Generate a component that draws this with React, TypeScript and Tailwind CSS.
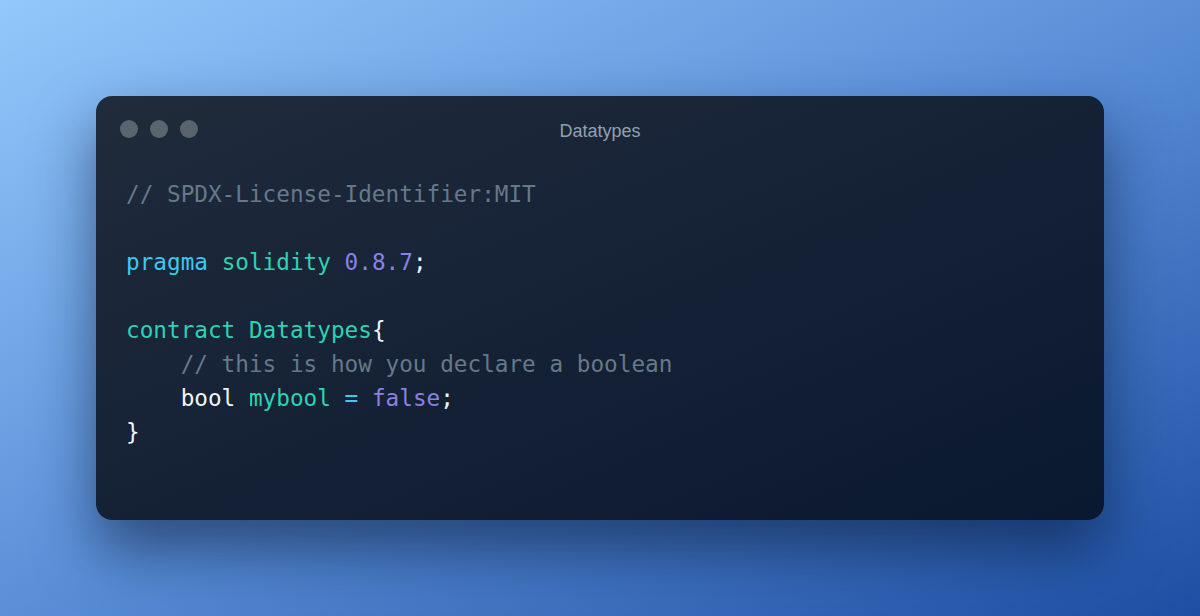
import React from 'react'

const mono = "font-['DejaVu_Sans_Mono',monospace]"

function Line({ children }: { children?: React.ReactNode }) {
  return <div className="h-[34px] whitespace-pre">{children}</div>
}

export default function App() {
  return (
    <main className="w-[1200px] h-[616px] flex items-center justify-center bg-gradient-to-br from-[#93c8fb] via-[#5a8fd8] to-[#1c4ea3]">
      <div className="w-[1008px] h-[424px] rounded-2xl bg-gradient-to-br from-[#202b3b] to-[#0a1830] shadow-[0_30px_60px_rgba(8,20,50,0.55)] flex flex-col">
        <div className="grid grid-cols-3 items-start pt-6 px-6">
          <div className="flex gap-3">
            <span className="w-[18px] h-[18px] rounded-full bg-[#5b636e]" />
            <span className="w-[18px] h-[18px] rounded-full bg-[#5b636e]" />
            <span className="w-[18px] h-[18px] rounded-full bg-[#5b636e]" />
          </div>
          <div className="text-center text-[18px] leading-[22px] text-[#94a0ad] font-['Liberation_Sans',Arial,sans-serif]">
            Datatypes
          </div>
          <div />
        </div>
        <div className={`${mono} text-[22.7px] leading-[34px] text-[#f1f5f9] mt-[35px] pl-[30px]`}>
          <Line><span className="text-[#66788a]">// SPDX-License-Identifier:MIT</span></Line>
          <Line />
          <Line>
            <span className="text-[#3cc8f0]">pragma</span>{' '}
            <span className="text-[#2cd3b4]">solidity</span>{' '}
            <span className="text-[#8a80e4]">0.8.7</span>;
          </Line>
          <Line />
          <Line>
            <span className="text-[#2cd3b4]">contract</span>{' '}
            <span className="text-[#2cd3b4]">Datatypes</span>{'{'}
          </Line>
          <Line>
            {'    '}<span className="text-[#66788a]">// this is how you declare a boolean</span>
          </Line>
          <Line>
            {'    '}bool <span className="text-[#2cd3b4]">mybool</span>{' '}
            <span className="text-[#3cc8f0]">=</span>{' '}
            <span className="text-[#8a80e4]">false</span>;
          </Line>
          <Line>{'}'}</Line>
        </div>
      </div>
    </main>
  )
}
